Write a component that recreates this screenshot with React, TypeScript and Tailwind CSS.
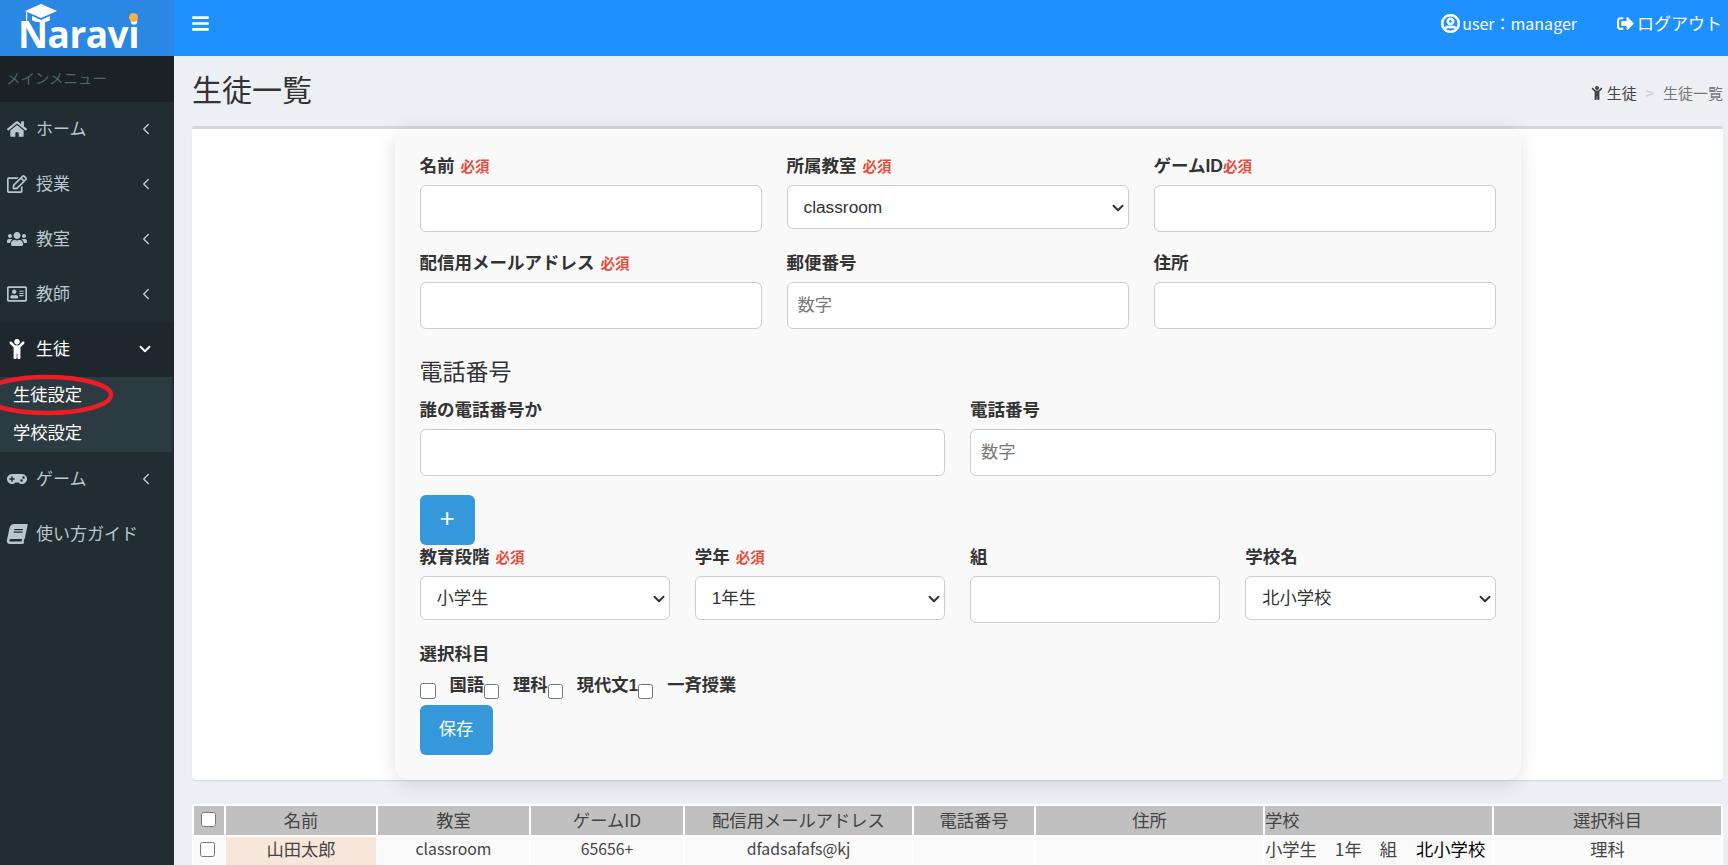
import type { ReactNode } from "react";
import { ChevronDown, ChevronLeft } from "lucide-react";
import {
  FaBars,
  FaBook,
  FaChild,
  FaGamepad,
  FaHome,
  FaRegAddressCard,
  FaRegEdit,
  FaRegUserCircle,
  FaSignOutAlt,
  FaUsers,
} from "react-icons/fa";

const fontStack = "font-['Noto_Sans_CJK_JP',sans-serif]";
const formFont = "font-['Liberation_Sans','Noto_Sans_CJK_JP',sans-serif]";

const MenuItem = ({
  icon,
  label,
  arrow = true,
  active = false,
}: {
  icon: ReactNode;
  label: string;
  arrow?: boolean;
  active?: boolean;
}) => (
  <div
    className={`flex items-center h-[55px] pl-[7px] pr-[20px] text-[17px] ${
      active ? "bg-[#1e282c] text-white" : "text-[#b8c7ce]"
    }`}
  >
    <span className="flex items-center justify-center w-5 -mt-[1px] text-[20px]">{icon}</span>
    <span className="ml-[9px] flex-1 -mt-[4px]">{label}</span>
    {arrow &&
      (active ? (
        <ChevronDown size={18} strokeWidth={2.4} className="-mt-[1px]" />
      ) : (
        <ChevronLeft size={18} strokeWidth={2} className="-mr-[1px] -mt-[2px]" />
      ))}
  </div>
);

const Sidebar = () => (
  <aside className="relative flex flex-col w-[174px] shrink-0 bg-[#222d32]">
    <div className="flex justify-center h-[56px] bg-[#2a87e3]">
      <div className="relative w-[130px]">
        <svg viewBox="0 0 32 22" className="absolute left-[3px] top-[4px] w-[32px] h-[22px]" fill="#fff">
          <path d="M16 0 32 7 16 14 0 7Z" />
          <path d="M7 12 16 16 25 12V16C22 19 10 19 7 16Z" />
          <rect x="1" y="8" width="1.2" height="11" />
        </svg>
        <span className="absolute -left-[4px] top-[11px] font-['Open_Sans',sans-serif] font-bold text-[37px] leading-[46px] tracking-[-0.5px] text-white">
          Naravi
        </span>
        <span className="absolute left-[107px] top-[13px] w-[9px] h-[9px] rounded-full bg-[#fbb040]" />
      </div>
    </div>
    <div className="flex items-center h-[46px] pl-[6px] pb-[2px] bg-[#1a2226] text-[14.5px] text-[#4b646f]">メインメニュー</div>
    <MenuItem icon={<FaHome />} label="ホーム" />
    <MenuItem icon={<FaRegEdit />} label="授業" />
    <MenuItem icon={<FaUsers />} label="教室" />
    <MenuItem icon={<FaRegAddressCard />} label="教師" />
    <MenuItem icon={<FaChild />} label="生徒" active />
    <div className="flex flex-col justify-center gap-[12px] h-[75px] w-[172px] pl-[13px] pb-[2px] bg-[#2c3b41] text-[17.3px] leading-[26px] text-white">
      <span className="-mt-[2px]">生徒設定</span>
      <span>学校設定</span>
    </div>
    <MenuItem icon={<FaGamepad />} label="ゲーム" />
    <MenuItem icon={<FaBook className="-skew-x-12" />} label="使い方ガイド" arrow={false} />
    {/* hand drawn red circle over the menu */}
    <svg viewBox="0 0 120 44" className="absolute left-0 top-[373px] w-[120px] h-[44px]" fill="none">
      <ellipse cx="47" cy="22" rx="64" ry="18" stroke="#ee1c25" strokeWidth="4.5" />
    </svg>
  </aside>
);

const Required = ({ tight = false }: { tight?: boolean }) => (
  <span className={`${tight ? "" : "ml-[6px]"} text-[14.5px] text-[#e74c3c]`}>必須</span>
);

const Label = ({ text, required, tight }: { text: string; required?: boolean; tight?: boolean }) => (
  <label className="block h-6 mb-[7px] leading-6 text-[17.5px] font-bold text-[#333]">
    {text}
    {required && <Required tight={tight} />}
  </label>
);

const inputClass = `block w-full h-[47px] px-[10px] rounded-[6px] border border-[#ccc] bg-white text-[17.3px] placeholder:text-[#777] ${formFont}`;

const SelectBox = ({ value }: { value: string }) => (
  <div className="relative">
    <select className={`block w-full h-[44px] pl-4 pr-1 pt-[1px] rounded-[6px] border border-[#ccc] bg-white appearance-none text-[17.3px] text-[#333] ${formFont}`}>
      <option>{value}</option>
    </select>
    <ChevronDown size={18} strokeWidth={2.6} className="absolute right-[2px] top-[14px] text-[#333] pointer-events-none" />
  </div>
);

const FormCard = () => (
  <div className={`w-[1126px] mx-auto px-[25px] pt-[25px] pb-[25px] rounded-[15px] bg-[#f9f9f9] shadow-[0_4px_20px_rgba(0,0,0,0.12)] ${formFont}`}>
    <div className="grid grid-cols-3 gap-x-[25px] gap-y-[19px]">
      <div>
        <Label text="名前" required />
        <input className={inputClass} />
      </div>
      <div>
        <Label text="所属教室" required />
        <SelectBox value="classroom" />
      </div>
      <div>
        <Label text="ゲームID" required tight />
        <input className={inputClass} />
      </div>
      <div>
        <Label text="配信用メールアドレス" required />
        <input className={inputClass} />
      </div>
      <div>
        <Label text="郵便番号" />
        <input className={inputClass} placeholder="数字" />
      </div>
      <div>
        <Label text="住所" />
        <input className={inputClass} />
      </div>
    </div>

    <h2 className="mt-7 mb-[11px] text-[23px] leading-[30px] text-[#333]">電話番号</h2>
    <div className="grid grid-cols-2 gap-x-[25px]">
      <div>
        <Label text="誰の電話番号か" />
        <input className={inputClass} />
      </div>
      <div>
        <Label text="電話番号" />
        <input className={inputClass} placeholder="数字" />
      </div>
    </div>

    <button className="block mt-[19px] pb-1 w-[55px] h-[50px] rounded-[6px] bg-[#3498db] text-[26px] text-white">+</button>

    <div className="grid grid-cols-4 gap-x-[25px]">
      <div>
        <Label text="教育段階" required />
        <SelectBox value="小学生" />
      </div>
      <div>
        <Label text="学年" required />
        <SelectBox value="1年生" />
      </div>
      <div>
        <Label text="組" />
        <input className={inputClass} />
      </div>
      <div>
        <Label text="学校名" />
        <SelectBox value="北小学校" />
      </div>
    </div>

    <div className="mt-[19px] h-6 leading-6 text-[17.5px] font-bold text-[#333]">選択科目</div>
    <div className="flex items-start h-[39px] mt-[7px] text-[17.3px] leading-6 font-bold text-[#333]">
      <input type="checkbox" className="w-4 h-4 mt-[10px]" />
      <span className="ml-[14px]">国語</span>
      <input type="checkbox" className="w-[15px] h-[15px] mt-[11px]" />
      <span className="ml-[14px]">理科</span>
      <input type="checkbox" className="w-[15px] h-[15px] mt-[11px]" />
      <span className="ml-[14px]">現代文1</span>
      <input type="checkbox" className="w-[15px] h-[15px] mt-[11px]" />
      <span className="ml-[14px]">一斉授業</span>
    </div>
    <button className="block -mt-[7px] w-[73px] h-[50px] rounded-[6px] bg-[#3498db] text-[17.3px] text-white">保存</button>
  </div>
);

const headers = ["名前", "教室", "ゲームID", "配信用メールアドレス", "電話番号", "住所", "学校", "選択科目"];

const StudentsTable = () => (
  <table className="mt-6 w-[1531px] table-fixed border-separate border-spacing-[2px] bg-white text-[17.3px] text-[#444]">
    <colgroup>
      <col className="w-[30px]" />
      <col className="w-[150px]" />
      <col className="w-[151px]" />
      <col className="w-[152px]" />
      <col className="w-[227px]" />
      <col className="w-[120px]" />
      <col className="w-[227px]" />
      <col className="w-[227px]" />
      <col className="w-[227px]" />
    </colgroup>
    <thead>
      <tr className="h-[29px] bg-[#c0c0c0]">
        <th className="p-0 pb-[3px]">
          <input type="checkbox" className="block ml-[7px] w-[15px] h-[15px]" />
        </th>
        {headers.map((header) => (
          <th key={header} className={`p-0 pb-[2px] font-normal ${header === "学校" ? "text-left" : "text-center"}`}>
            {header}
          </th>
        ))}
      </tr>
    </thead>
    <tbody>
      <tr className="h-[32px] bg-[#fafafa] text-center align-top leading-[24px]">
        <td className="p-0 pt-[5px]">
          <input type="checkbox" className="block ml-[6px] w-[15px] h-[15px]" />
        </td>
        <td className="p-0 bg-[#f7e6da]">山田太郎</td>
        <td className="p-0 text-[15.8px]">classroom</td>
        <td className="p-0 text-[15.8px]">65656+</td>
        <td className="p-0 text-[15.8px]">dfadsafafs@kj</td>
        <td className="p-0"></td>
        <td className="p-0"></td>
        <td className="p-0 text-left whitespace-nowrap">
          小学生<span className="ml-[18px]">1年</span>
          <span className="ml-[18px]">組</span>
          <span className="ml-[19px] text-black">北小学校</span>
        </td>
        <td className="p-0">理科</td>
      </tr>
    </tbody>
  </table>
);

export default function App() {
  return (
    <div className={`flex w-[1728px] h-[865px] overflow-hidden bg-[#ecf0f5] ${fontStack}`}>
      <Sidebar />
      <div className="flex flex-col flex-1 min-w-0">
        <header className="flex items-center h-[56px] shrink-0 pl-[17px] pr-[6px] bg-[#1e90ff] text-white text-[17px]">
          <FaBars className="text-[19px] -mt-[10px]" />
          <div className="flex items-center ml-auto -mt-[10px]">
            <FaRegUserCircle className="text-[19px] mr-[2px]" stroke="currentColor" strokeWidth={24} />
            <span className="text-[16px]">user：manager</span>
            <FaSignOutAlt className="ml-10 mr-[3px] text-[17px]" />
            <span>ログアウト</span>
          </div>
        </header>

        <main className="pl-[18px] pr-[5px]">
          <div className="flex items-center h-[70px]">
            <h1 className="-mt-[6px] text-[30px] text-[#333]">生徒一覧</h1>
            <div className="flex items-center ml-auto mt-[4px] text-[15px] text-[#444]">
              <FaChild className="mr-[3px] text-[14px]" />
              <span>生徒</span>
              <span className="mx-[9px] text-[#ccc]">&gt;</span>
              <span className="text-[#777]">生徒一覧</span>
            </div>
          </div>

          <div className="h-[654px] rounded-[3px] border-t-[3px] border-[#d2d6de] bg-white shadow-[0_1px_1px_rgba(0,0,0,0.1)]">
            <FormCard />
          </div>

          <StudentsTable />
        </main>
      </div>
    </div>
  );
}
